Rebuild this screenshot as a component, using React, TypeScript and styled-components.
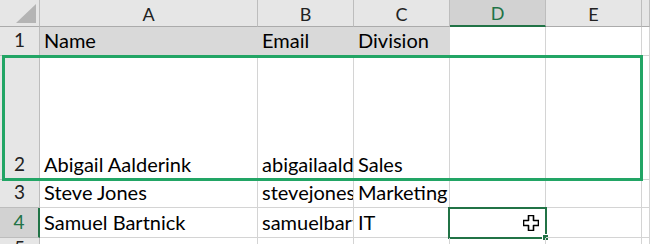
import { Fragment } from "react";
import styled, { createGlobalStyle, css } from "styled-components";

const GlobalStyle = createGlobalStyle`
  html, body {
    margin: 0;
    padding: 0;
    background: #ffffff;
  }
  body {
    font-family: Lato, "Liberation Sans", sans-serif;
  }
`;

const GRID = "#d4d4d4";
const HEAD_LINE = "#bdbdbd";
const EXCEL_GREEN = "#217346";

const Sheet = styled.div`
  position: relative;
  display: grid;
  grid-template-columns: 40px 218px 96px 96px 96px 96px 1fr;
  grid-template-rows: 27px 29px 124px 28px 30px 1fr;
  width: 650px;
  height: 244px;
  overflow: hidden;
  background: #ffffff;
`;

const Corner = styled.div`
  display: flex;
  align-items: flex-end;
  justify-content: flex-end;
  padding: 0 3px 3px 0;
  background: #e6e6e6;
  border-right: 1px solid ${HEAD_LINE};
  border-bottom: 1px solid #ababab;
`;

const ColHeader = styled.div<{ $active?: boolean }>`
  display: flex;
  align-items: center;
  justify-content: center;
  background: #e6e6e6;
  border-right: 1px solid ${HEAD_LINE};
  border-bottom: 1px solid #ababab;
  font-size: 18px;
  color: #222;
  padding-top: 1px;

  ${(p) =>
    p.$active &&
    css`
      background: #d2d2d2;
      color: ${EXCEL_GREEN};
      border-bottom: 2px solid ${EXCEL_GREEN};
    `}
`;

const RowHeader = styled.div<{ $active?: boolean }>`
  display: flex;
  align-items: flex-end;
  justify-content: center;
  padding-bottom: 5px;
  background: #e6e6e6;
  border-right: 1px solid ${HEAD_LINE};
  border-bottom: 1px solid ${HEAD_LINE};
  font-size: 19px;
  line-height: 20px;
  color: #222;

  ${(p) =>
    p.$active &&
    css`
      background: #d2d2d2;
      color: ${EXCEL_GREEN};
      border-right: 2px solid ${EXCEL_GREEN};
    `}
`;

const Cell = styled.div<{ $fill?: boolean; $clip?: boolean; $active?: boolean }>`
  position: relative;
  display: flex;
  align-items: flex-end;
  min-width: 0;
  padding: 0 0 5px 4px;
  border-right: 1px solid ${GRID};
  border-bottom: 1px solid ${GRID};
  font-size: 20px;
  line-height: 20px;
  color: #000;
  white-space: nowrap;
  overflow: ${(p) => (p.$clip ? "hidden" : "visible")};

  ${(p) =>
    p.$fill &&
    css`
      background: #d9d9d9;
      border-right-color: #d9d9d9;
    `}

  ${(p) =>
    p.$active &&
    css`
      justify-content: flex-end;
      align-items: center;
      padding: 0 6px 0 0;
    `}
`;

const Highlight = styled.div`
  position: absolute;
  left: 2px;
  top: 55px;
  width: 641px;
  height: 126px;
  box-sizing: border-box;
  border: 3px solid #22a565;
  pointer-events: none;
`;

const ActiveFrame = styled.div`
  position: absolute;
  top: -1px;
  left: -2px;
  right: -2px;
  bottom: -2px;
  border: 2px solid ${EXCEL_GREEN};
  box-sizing: border-box;
  pointer-events: none;
`;

const FillHandle = styled.div`
  position: absolute;
  right: -4px;
  bottom: -4px;
  width: 5px;
  height: 5px;
  background: ${EXCEL_GREEN};
  border: 1px solid #ffffff;
`;

const columns = ["A", "B", "C", "D", "E", ""];
const clipped = [false, true, false, false, false, false];

const rows: { num: string; cells: string[]; fill?: boolean }[] = [
  { num: "1", cells: ["Name", "Email", "Division", "", "", ""], fill: true },
  { num: "2", cells: ["Abigail Aalderink", "abigailaalderink@example.com", "Sales", "", "", ""] },
  { num: "3", cells: ["Steve Jones", "stevejones@example.com", "Marketing", "", "", ""] },
  { num: "4", cells: ["Samuel Bartnick", "samuelbartnick@example.com", "IT", "", "", ""] },
  { num: "5", cells: ["", "", "", "", "", ""] },
];

const PlusCursor = () => (
  <svg width="16" height="16" viewBox="0 0 16 16">
    <path
      d="M5.5 0.5h5v5h5v5h-5v5h-5v-5h-5v-5h5z"
      fill="#ffffff"
      stroke="#000000"
      strokeWidth="1.6"
      strokeLinejoin="round"
    />
  </svg>
);

const App = () => {
  return (
    <>
      <GlobalStyle />
      <Sheet>
        <Corner>
          <svg width="20" height="19" viewBox="0 0 20 19">
            <polygon points="20,0 20,19 0,19" fill="#b4b4b4" />
          </svg>
        </Corner>
        {columns.map((c, i) => (
          <ColHeader key={i} $active={c === "D"}>
            {c}
          </ColHeader>
        ))}

        {rows.map((r) => (
          <Fragment key={r.num}>
            <RowHeader $active={r.num === "4"}>{r.num}</RowHeader>
            {r.cells.map((v, i) => {
              const active = r.num === "4" && i === 3;
              return (
                <Cell
                  key={i}
                  $fill={r.fill && i < 3}
                  $clip={clipped[i]}
                  $active={active}
                >
                  {active ? (
                    <>
                      <PlusCursor />
                      <ActiveFrame>
                        <FillHandle />
                      </ActiveFrame>
                    </>
                  ) : (
                    v
                  )}
                </Cell>
              );
            })}
          </Fragment>
        ))}
        <Highlight />
      </Sheet>
    </>
  );
};

export default App;
